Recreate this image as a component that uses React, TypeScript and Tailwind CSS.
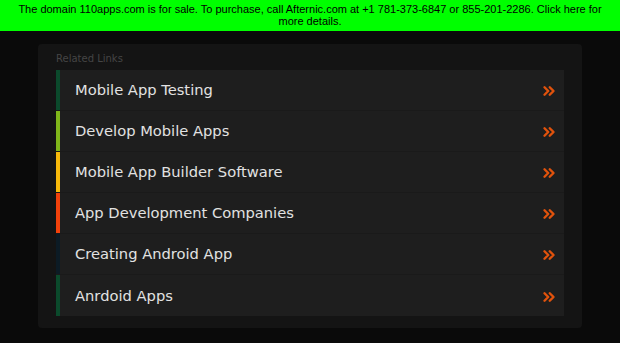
import { ChevronsRight } from "lucide-react";

const links = [
  { label: "Mobile App Testing", color: "bg-[#0b4a2c]" },
  { label: "Develop Mobile Apps", color: "bg-[#80b61a]" },
  { label: "Mobile App Builder Software", color: "bg-[#f7b90a]" },
  { label: "App Development Companies", color: "bg-[#f2410b]" },
  { label: "Creating Android App", color: "bg-[#0c1b25]" },
  { label: "Anrdoid Apps", color: "bg-[#0b4a2c]" },
];

export default function App() {
  return (
    <div className="min-h-[343px] bg-[#0a0a0a] font-['DejaVu_Sans',sans-serif]">
      <div className="h-[31px] bg-[#00ff00] px-[12px] pt-[4px] text-center font-['Liberation_Sans',sans-serif] text-[11px] leading-[11.5px] text-black">
        The domain 110apps.com is for sale. To purchase, call Afternic.com at +1 781-373-6847 or 855-201-2286. Click here for more details.
      </div>
      <div className="px-[38px] pt-[13px]">
        <div className="rounded bg-[#141414] pb-[12px] pl-[18px] pr-[18px] pt-[9px]">
          <div className="mb-[5px] text-[10px] leading-[12px] text-[#454545]">Related Links</div>
          <ul>
            {links.map((link) => (
              <li
                key={link.label}
                className="flex h-[41px] items-center border-b border-[#1a1a1a] bg-[#1e1e1e] last:border-b-0"
              >
                <span className={`h-full w-[4px] ${link.color}`} />
                <span className="ml-[15px] flex-1 pt-[1px] text-[14.7px] text-[#e2e2e2]">{link.label}</span>
                <ChevronsRight className="mr-[6px] mt-[2px] text-[#e0520c]" size={18} strokeWidth={3.2} />
              </li>
            ))}
          </ul>
        </div>
      </div>
    </div>
  );
}
